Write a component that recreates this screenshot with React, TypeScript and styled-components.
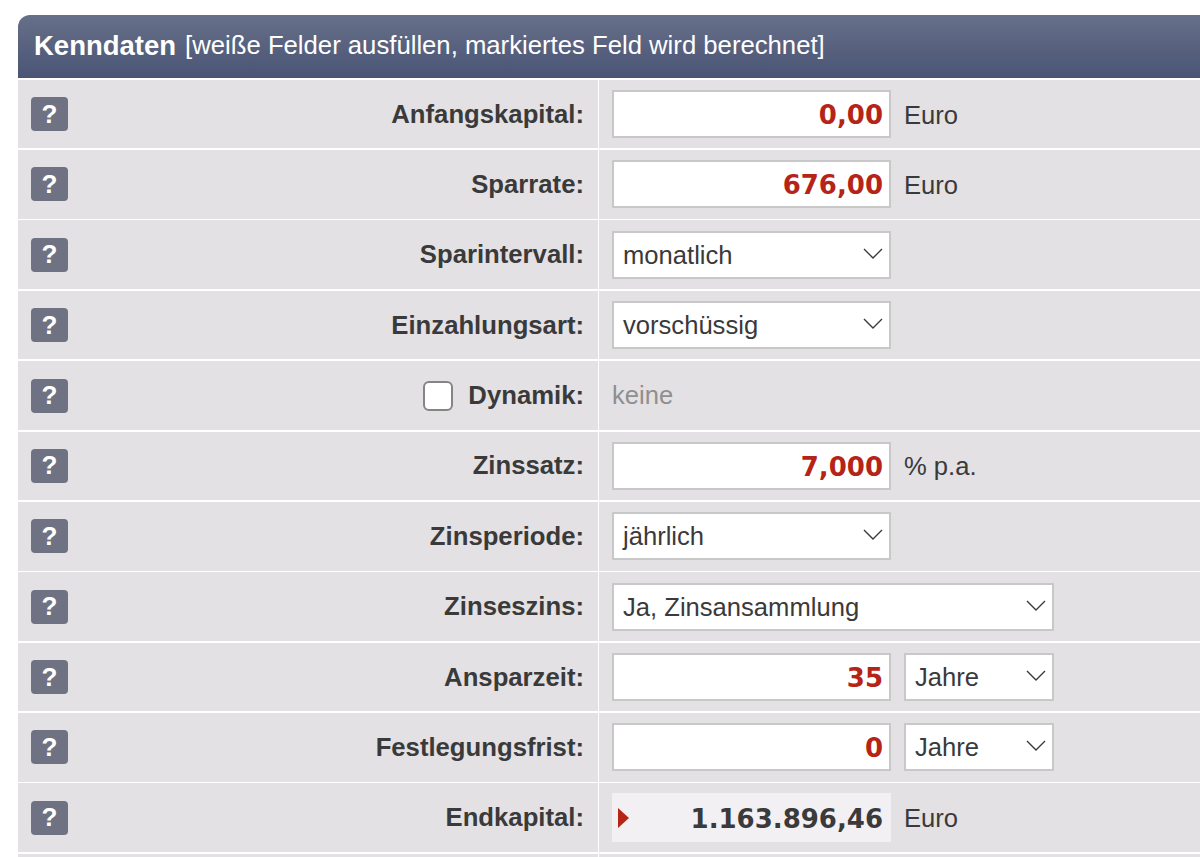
import React from "react";
import styled, { createGlobalStyle } from "styled-components";

const Global = createGlobalStyle`
  html, body { margin: 0; padding: 0; background: #fff; height: 857px; overflow: hidden; }
  body { font-family: "Liberation Sans", Arial, sans-serif; color: #3a3a3a; }
  * { box-sizing: border-box; }
`;

const Panel = styled.section`
  margin: 15px 0 0 18px;
  width: 1182px;
  height: 842px;
  overflow: hidden;
`;

const Header = styled.header`
  height: 63px;
  border-radius: 12px 0 0 0;
  padding: 0 16px 2px;
  display: flex;
  align-items: center;
  gap: 9px;
  background: linear-gradient(#667089, #4a5475);
  color: #fff;
`;

const Title = styled.strong`
  font-size: 27.5px;
  font-weight: 700;
`;

const Hint = styled.span`
  font-size: 25.7px;
  white-space: nowrap;
`;

const Row = styled.div`
  display: grid;
  grid-template-columns: 579.5px 1.5px 1fr;
  height: 70.38px;
  padding-top: 1.7px;
`;

const LabelCell = styled.div`
  background: #e3e1e4;
  height: 68.68px;
  display: flex;
  align-items: center;
  padding: 0 13.5px 0 13px;
`;

const Divider = styled.div`
  background: #fff;
`;

const ValueCell = styled.div`
  background: #e3e1e4;
  height: 68.68px;
  display: flex;
  align-items: center;
  gap: 13px;
  padding-left: 13px;
`;

const HelpButton = styled.button`
  width: 37px;
  height: 34px;
  border: 0;
  padding: 0;
  border-radius: 4px;
  background: #6f7282;
  color: #fff;
  font: 700 26px "Liberation Sans", Arial, sans-serif;
  flex: none;
`;

const LabelGroup = styled.div`
  margin-left: auto;
  display: flex;
  align-items: center;
  gap: 15px;
`;

const Label = styled.label`
  font-size: 25.7px;
  font-weight: 700;
  color: #3a3a3a;
`;

const Checkbox = styled.span`
  width: 30px;
  height: 30px;
  border: 2px solid #858585;
  border-radius: 6px;
  background: #fff;
  display: block;
`;

const NumberInput = styled.input`
  width: 279px;
  height: 48px;
  border: 2px solid #c8c8c8;
  background: #fff;
  padding: 2px 6px 0 6px;
  text-align: right;
  font: 700 26px "DejaVu Sans", Verdana, sans-serif;
  color: #b52416;
  outline: none;
`;

const SelectBox = styled.div<{ $width: number }>`
  position: relative;
  width: ${(p) => p.$width}px;
  height: 48px;
  border: 2px solid #c8c8c8;
  background: #fff;
  display: flex;
  align-items: center;
  padding: 1px 0 0 9px;
  font-size: 25.6px;
  color: #3a3a3a;
`;

const Chevron = styled.svg`
  position: absolute;
  right: 6px;
  top: 14px;
  width: 20px;
  height: 12px;
`;

const Unit = styled.span`
  font-size: 25.6px;
  color: #3a3a3a;
  padding-top: 2px;
`;

const Muted = styled.span`
  font-size: 25.6px;
  color: #8f8f8f;
`;

const Result = styled.output`
  position: relative;
  width: 279px;
  height: 49px;
  background: #f2f0f3;
  padding: 2px 8px 0 0;
  display: flex;
  align-items: center;
  justify-content: flex-end;
  font: 700 26px "DejaVu Sans", Verdana, sans-serif;
  color: #3a3a3a;
`;

const Marker = styled.span`
  position: absolute;
  left: 6px;
  top: 15px;
  width: 0;
  height: 0;
  border-style: solid;
  border-width: 10px 0 10px 11px;
  border-color: transparent transparent transparent #b52416;
`;

const Select = ({ value, width }: { value: string; width: number }) => (
  <SelectBox $width={width}>
    {value}
    <Chevron viewBox="0 0 20 12" fill="none" stroke="#3a3a3a" strokeWidth="1.4">
      <path d="M1 2l9 9 9-9" />
    </Chevron>
  </SelectBox>
);

const Amount = ({ value }: { value: string }) => <NumberInput readOnly value={value} />;

const rows: { label: string; check?: boolean; value: React.ReactNode }[] = [
  { label: "Anfangskapital:", value: <><Amount value="0,00" /><Unit>Euro</Unit></> },
  { label: "Sparrate:", value: <><Amount value="676,00" /><Unit>Euro</Unit></> },
  { label: "Sparintervall:", value: <Select value="monatlich" width={279} /> },
  { label: "Einzahlungsart:", value: <Select value="vorschüssig" width={279} /> },
  { label: "Dynamik:", check: true, value: <Muted>keine</Muted> },
  { label: "Zinssatz:", value: <><Amount value="7,000" /><Unit>% p.a.</Unit></> },
  { label: "Zinsperiode:", value: <Select value="jährlich" width={279} /> },
  { label: "Zinseszins:", value: <Select value="Ja, Zinsansammlung" width={442} /> },
  { label: "Ansparzeit:", value: <><Amount value="35" /><Select value="Jahre" width={150} /></> },
  { label: "Festlegungsfrist:", value: <><Amount value="0" /><Select value="Jahre" width={150} /></> },
  { label: "Endkapital:", value: <><Result><Marker />1.163.896,46</Result><Unit>Euro</Unit></> },
  { label: "", value: null },
];

export default function App() {
  return (
    <>
      <Global />
      <Panel>
        <Header>
          <Title>Kenndaten</Title>
          <Hint>[weiße Felder ausfüllen, markiertes Feld wird berechnet]</Hint>
        </Header>
        {rows.map((r, i) => (
          <Row key={i}>
            <LabelCell>
              {r.label && <HelpButton>?</HelpButton>}
              <LabelGroup>
                {r.check && <Checkbox />}
                <Label>{r.label}</Label>
              </LabelGroup>
            </LabelCell>
            <Divider />
            <ValueCell>{r.value}</ValueCell>
          </Row>
        ))}
      </Panel>
    </>
  );
}
